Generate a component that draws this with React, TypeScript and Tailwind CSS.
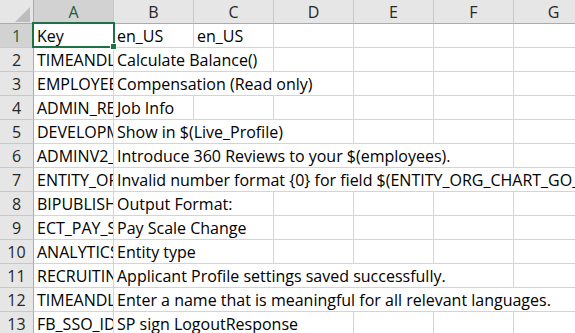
import React from 'react';

type Row = {
  key: string;
  text: string;
  span: number;
  extra?: string;
};

const columns = ['A', 'B', 'C', 'D', 'E', 'F', 'G'];

const rows: Row[] = [
  { key: 'Key', text: 'en_US', span: 1, extra: 'en_US' },
  { key: 'TIMEANDLABOR_CALC_BALANCE', text: 'Calculate Balance()', span: 2 },
  { key: 'EMPLOYEE_COMP_READONLY', text: 'Compensation (Read only)', span: 3 },
  { key: 'ADMIN_REQUEST_JOB_INFO', text: 'Job Info', span: 1 },
  { key: 'DEVELOPMENT_SHOW_IN_LP', text: 'Show in $(Live_Profile)', span: 3 },
  { key: 'ADMINV2_INTRO_360', text: 'Introduce 360 Reviews to your $(employees).', span: 5 },
  {
    key: 'ENTITY_ORG_CHART_INVALID_NUMBER',
    text: 'Invalid number format {0} for field $(ENTITY_ORG_CHART_GO_TO_FIELD).',
    span: 6,
  },
  { key: 'BIPUBLISHER_OUTPUT_FORMAT', text: 'Output Format:', span: 2 },
  { key: 'ECT_PAY_SCALE_CHANGE', text: 'Pay Scale Change', span: 2 },
  { key: 'ANALYTICS_ENTITY_TYPE', text: 'Entity type', span: 2 },
  { key: 'RECRUITING_PROFILE_SAVED', text: 'Applicant Profile settings saved successfully.', span: 5 },
  { key: 'TIMEANDLABOR_NAME_HINT', text: 'Enter a name that is meaningful for all relevant languages.', span: 6 },
  { key: 'FB_SSO_IDP_LOGOUT_RESPONSE', text: 'SP sign LogoutResponse', span: 3 },
];

const spanClass: Record<number, string> = {
  1: 'col-span-1',
  2: 'col-span-2',
  3: 'col-span-3',
  4: 'col-span-4',
  5: 'col-span-5',
  6: 'col-span-6',
};

const cell =
  'flex items-center overflow-hidden whitespace-nowrap border-r border-b border-[#d4d4d4] pl-[3px] pt-[1px] text-black';

export default function App() {
  return (
    <div
      className="relative h-[333px] w-[575px] overflow-hidden bg-white text-[16px] leading-none"
      style={{ fontFamily: '"Open Sans", "Noto Sans", sans-serif' }}
    >
      <div className="grid w-[594px] grid-cols-[34px_repeat(7,80px)] grid-rows-[24px_repeat(13,24px)]">
        {/* corner with select-all triangle */}
        <div className="relative border-r border-b border-[#ababab] bg-[#e6e6e6]">
          <div className="absolute right-[3px] bottom-[1px] h-0 w-0 border-b-[15px] border-l-[15px] border-b-[#bdbdbd] border-l-transparent" />
        </div>

        {columns.map((c, i) => (
          <div
            key={c}
            className={`flex items-center justify-center border-r border-b border-r-[#c8c8c8] ${
              i === 0
                ? 'bg-[#d2d2d2] text-[#1b5e38] border-b-[#1e7145]'
                : 'bg-[#e6e6e6] text-[#262626] border-b-[#ababab]'
            }`}
          >
            {c}
          </div>
        ))}

        {rows.map((r, i) => {
          const used = r.span + (r.extra ? 1 : 0);
          const empties = Array.from({ length: 6 - used });
          return (
            <React.Fragment key={i}>
              <div
                className={`flex items-center justify-center border-r border-b border-b-[#c8c8c8] ${
                  i === 0
                    ? 'bg-[#d2d2d2] text-[#1b5e38] border-r-[#1e7145]'
                    : 'bg-[#e6e6e6] text-[#262626] border-r-[#ababab]'
                }`}
              >
                {i + 1}
              </div>
              <div className={cell}>{r.key}</div>
              <div className={`${cell} ${spanClass[r.span]}`}>{r.text}</div>
              {r.extra && <div className={cell}>{r.extra}</div>}
              {empties.map((_, j) => (
                <div key={j} className={cell} />
              ))}
            </React.Fragment>
          );
        })}
      </div>

      {/* active cell outline and fill handle */}
      <div className="pointer-events-none absolute left-[32px] top-[22px] h-[26px] w-[83px] border-2 border-[#1e7145]" />
      <div className="pointer-events-none absolute left-[110px] top-[43px] h-[7px] w-[7px] border border-white bg-[#1e7145]" />
    </div>
  );
}
